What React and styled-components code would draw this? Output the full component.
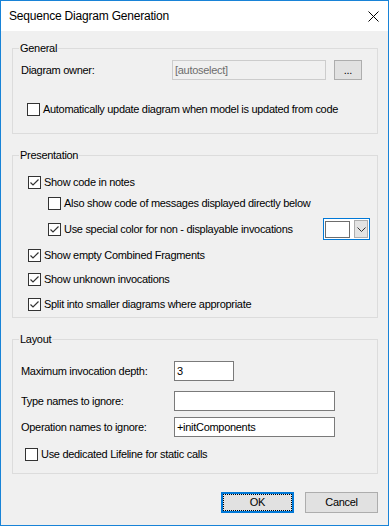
import React from "react";
import styled, { createGlobalStyle } from "styled-components";

const GlobalStyle = createGlobalStyle`
  html, body { margin: 0; padding: 0; background: #ffffff; }
  body { font-family: "Liberation Sans", Arial, sans-serif; }
  * { box-sizing: border-box; }
`;

const Window = styled.div`
  width: 389px;
  height: 526px;
  border: 1px solid #1883d7;
  background: #f0f0f0;
  display: flex;
  flex-direction: column;
  font-family: "Liberation Sans", Arial, sans-serif;
  font-size: 11px;
  letter-spacing: -0.3px;
  color: #000;
`;

const TitleBar = styled.div`
  height: 30px;
  flex: none;
  background: #ffffff;
  display: flex;
  align-items: center;
  justify-content: space-between;
  padding: 0 9px 0 8px;
  font-size: 12px;
  letter-spacing: -0.2px;
`;

const CloseIcon = styled.svg`
  display: block;
  width: 11px;
  height: 11px;
  margin-top: 1px;
`;

const Content = styled.div`
  flex: 1;
  padding: 10px 10px 0 11px;
  display: flex;
  flex-direction: column;
`;

const Group = styled.fieldset`
  margin: ${(p) => p.$gap || 0}px 0 0 0;
  padding: 0;
  min-width: 0;
  border: 1px solid #dcdcdc;
`;

const Legend = styled.legend`
  margin-left: 6px;
  padding: 0 1px;
  line-height: 15px;
  font-size: 11px;
`;

const GroupBody = styled.div`
  display: flex;
  flex-direction: column;
  padding: 0 ${(p) => p.$right || 0}px ${(p) => p.$bottom}px 8px;
`;

const FieldRow = styled.div`
  display: grid;
  grid-template-columns: ${(p) => p.$label}px auto auto;
  justify-content: start;
  align-items: center;
  margin-top: ${(p) => p.$top}px;
  height: 20px;
`;

const Label = styled.span`
  white-space: nowrap;
  line-height: 13px;
`;

const TextBox = styled.div`
  width: ${(p) => p.$w}px;
  height: 20px;
  border: 1px solid ${(p) => (p.$disabled ? "#cccccc" : "#7a7a7a")};
  background: ${(p) => (p.$disabled ? "#f0f0f0" : "#ffffff")};
  color: ${(p) => (p.$disabled ? "#6d6d6d" : "#000000")};
  padding: 0 2px;
  display: flex;
  align-items: center;
  white-space: nowrap;
  line-height: 13px;
`;

const SmallButton = styled.div`
  width: 28px;
  height: 20px;
  margin-left: 8px;
  border: 1px solid #adadad;
  background: #e1e1e1;
  display: flex;
  align-items: flex-end;
  justify-content: center;
  padding-bottom: 3px;
  line-height: 11px;
`;

const CheckRow = styled.div`
  display: flex;
  align-items: center;
  gap: 3px;
  margin-top: ${(p) => p.$top}px;
  margin-left: ${(p) => p.$indent}px;
  min-height: 13px;
  line-height: 13px;
  white-space: nowrap;
`;

const RowText = styled.span`
  flex: 1;
`;

const Box = styled.span`
  flex: none;
  width: 13px;
  height: 13px;
  border: 1px solid #333333;
  background: #ffffff;
  display: flex;
  align-items: center;
  justify-content: center;
`;

const CheckSvg = styled.svg`
  display: block;
  width: 11px;
  height: 11px;
`;

const ColorPicker = styled.div`
  flex: none;
  width: 47px;
  height: 22px;
  border: 1px solid #0078d7;
  background: #ffffff;
  padding: 0 1px;
  display: flex;
  align-items: center;
  gap: 4px;
`;

const Swatch = styled.div`
  width: 25px;
  height: 17px;
  border: 1px solid #6d6d6d;
  background: #ffffff;
`;

const DropButton = styled.div`
  width: 14px;
  height: 18px;
  border: 1px solid #adadad;
  background: #e3e3e3;
  display: flex;
  align-items: center;
  justify-content: center;
`;

const ButtonBar = styled.div`
  display: flex;
  justify-content: flex-end;
  gap: 11px;
  margin-top: 18px;
`;

const Button = styled.div`
  width: 73px;
  height: 21px;
  display: flex;
  align-items: center;
  justify-content: center;
  background: #e1e1e1;
  border: ${(p) => (p.$default ? "2px solid #0078d7" : "1px solid #adadad")};
  outline: ${(p) => (p.$default ? "1px dotted #000" : "none")};
  outline-offset: -3px;
  line-height: 13px;
`;

function Check({ checked }) {
  return (
    <Box>
      {checked && (
        <CheckSvg viewBox="0 0 11 11">
          <path d="M1.5 5.5 L4 8 L9.5 2.5" fill="none" stroke="#333" strokeWidth="1.2" />
        </CheckSvg>
      )}
    </Box>
  );
}

function CheckItem({ checked, top, indent, children, extra }) {
  return (
    <CheckRow $top={top} $indent={indent}>
      <Check checked={checked} />
      <RowText>{children}</RowText>
      {extra}
    </CheckRow>
  );
}

export default function App() {
  return (
    <>
      <GlobalStyle />
      <Window>
        <TitleBar>
          <span>Sequence Diagram Generation</span>
          <CloseIcon viewBox="0 0 11 11">
            <path d="M0.5 0.5 L10.5 10.5 M10.5 0.5 L0.5 10.5" stroke="#000" strokeWidth="1" />
          </CloseIcon>
        </TitleBar>
        <Content>
          <Group>
            <Legend>General</Legend>
            <GroupBody $bottom={17}>
              <FieldRow $top={4} $label={151}>
                <Label>Diagram owner:</Label>
                <TextBox $w={154} $disabled>[autoselect]</TextBox>
                <SmallButton>...</SmallButton>
              </FieldRow>
              <CheckItem top={23} indent={6}>
                Automatically update diagram when model is updated from code
              </CheckItem>
            </GroupBody>
          </Group>

          <Group $gap={14}>
            <Legend>Presentation</Legend>
            <GroupBody $bottom={6} $right={7}>
              <CheckItem checked top={13} indent={7}>Show code in notes</CheckItem>
              <CheckItem top={8} indent={27}>Also show code of messages displayed directly below</CheckItem>
              <CheckItem
                checked
                top={8}
                indent={27}
                extra={
                  <ColorPicker>
                    <Swatch />
                    <DropButton>
                      <svg width="9" height="5" viewBox="0 0 9 5">
                        <path d="M0.5 0.5 L4.5 4.5 L8.5 0.5" fill="none" stroke="#333" strokeWidth="1" />
                      </svg>
                    </DropButton>
                  </ColorPicker>
                }
              >
                Use special color for non - displayable invocations
              </CheckItem>
              <CheckItem checked top={9} indent={7}>Show empty Combined Fragments</CheckItem>
              <CheckItem checked top={11} indent={7}>Show unknown invocations</CheckItem>
              <CheckItem checked top={12} indent={7}>Split into smaller diagrams where appropriate</CheckItem>
            </GroupBody>
          </Group>

          <Group $gap={14}>
            <Legend>Layout</Legend>
            <GroupBody $bottom={12}>
              <FieldRow $top={14} $label={153}>
                <Label>Maximum invocation depth:</Label>
                <TextBox $w={60}>3</TextBox>
              </FieldRow>
              <FieldRow $top={10} $label={153}>
                <Label>Type names to ignore:</Label>
                <TextBox $w={161} />
              </FieldRow>
              <FieldRow $top={6} $label={153}>
                <Label>Operation names to ignore:</Label>
                <TextBox $w={161}>+initComponents</TextBox>
              </FieldRow>
              <CheckItem top={11} indent={4}>Use dedicated Lifeline for static calls</CheckItem>
            </GroupBody>
          </Group>

          <ButtonBar>
            <Button $default>OK</Button>
            <Button>Cancel</Button>
          </ButtonBar>
        </Content>
      </Window>
    </>
  );
}
